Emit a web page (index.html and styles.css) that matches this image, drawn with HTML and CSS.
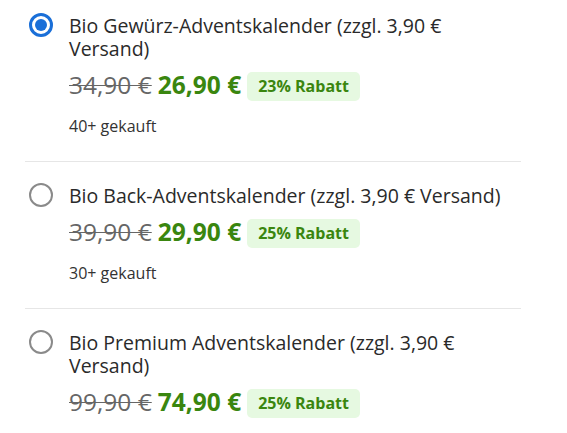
FILE: index.html
```html
<!DOCTYPE html>
<html lang="de">
<head>
<meta charset="utf-8">
<link rel="stylesheet" href="styles.css">
</head>
<body>
<div class="options">
  <label class="option">
    <span class="radio checked"></span>
    <div class="info">
      <div class="title">Bio Gewürz-Adventskalender (zzgl. 3,90 € Versand)</div>
      <div class="prices">
        <span class="old">34,90 €</span>
        <span class="new">26,90 €</span>
        <span class="badge">23% Rabatt</span>
      </div>
      <div class="sold">40+ gekauft</div>
    </div>
  </label>
  <label class="option">
    <span class="radio"></span>
    <div class="info">
      <div class="title">Bio Back-Adventskalender (zzgl. 3,90 € Versand)</div>
      <div class="prices">
        <span class="old">39,90 €</span>
        <span class="new">29,90 €</span>
        <span class="badge">25% Rabatt</span>
      </div>
      <div class="sold">30+ gekauft</div>
    </div>
  </label>
  <label class="option">
    <span class="radio"></span>
    <div class="info">
      <div class="title">Bio Premium Adventskalender (zzgl. 3,90 € Versand)</div>
      <div class="prices">
        <span class="old">99,90 €</span>
        <span class="new">74,90 €</span>
        <span class="badge">25% Rabatt</span>
      </div>
    </div>
  </label>
</div>
</body>
</html>
```
FILE: styles.css
```css
html, body {
  margin: 0;
  padding: 0;
  background: #fff;
}
body {
  font-family: "Open Sans", "Noto Sans", sans-serif;
  color: #222;
}
.options {
  width: 496px;
  margin-left: 25px;
}
.option {
  display: flex;
  align-items: flex-start;
  padding: 22px 0 24px 4px;
  border-bottom: 1px solid #e6e6e6;
}
.option:first-child {
  padding-top: 14px;
}
.option:last-child {
  border-bottom: none;
}
.radio {
  flex: none;
  box-sizing: border-box;
  width: 24px;
  height: 24px;
  border: 2px solid #8a8a8a;
  border-radius: 50%;
  margin-top: -1px;
  margin-right: 16px;
  position: relative;
}
.radio.checked {
  border: 3px solid #1a6fd8;
}
.radio.checked::after {
  content: "";
  position: absolute;
  left: 3px;
  top: 3px;
  width: 12px;
  height: 12px;
  border-radius: 50%;
  background: #1a6fd8;
}
.info {
  flex: 1;
}
.title {
  font-size: 19.5px;
  line-height: 23px;
  color: #2a2a2a;
}
.prices {
  display: flex;
  align-items: center;
  margin-top: 10px;
  height: 30px;
  line-height: 30px;
}
.old {
  font-size: 24.5px;
  color: #666;
  text-decoration: line-through;
  text-decoration-thickness: 1px;
  margin-right: 6px;
}
.new {
  font-size: 24.5px;
  font-weight: 700;
  color: #3a860f;
  margin-right: 6px;
}
.badge {
  background: #e6f9e1;
  color: #3a860f;
  font-weight: 700;
  font-size: 16px;
  line-height: 29px;
  padding: 0 11px;
  border-radius: 5px;
  margin-top: 3px;
}
.sold {
  font-size: 16px;
  line-height: 22px;
  color: #333;
  margin-top: 15px;
}
```
